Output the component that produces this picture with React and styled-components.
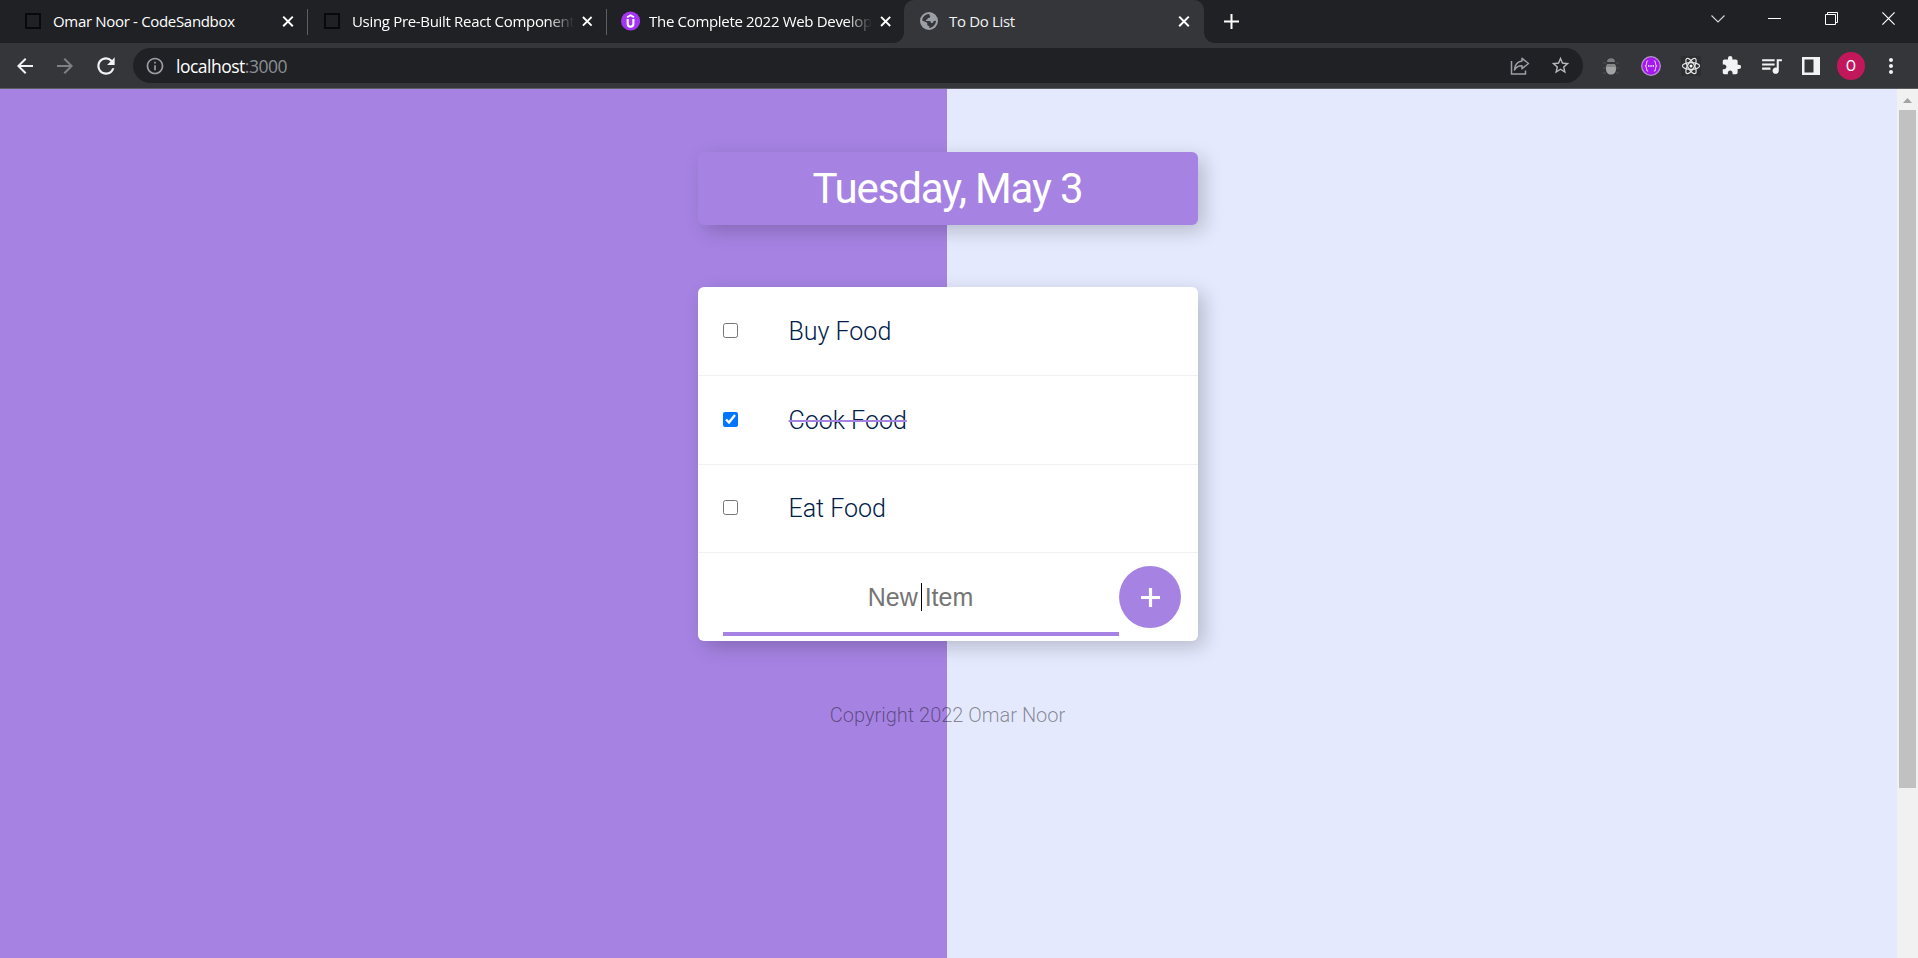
import React from "react";
import styled, { createGlobalStyle } from "styled-components";
import { MdArrowBack, MdArrowForward, MdRefresh, MdInfoOutline, MdStarBorder, MdExtension, MdQueueMusic, MdMoreVert } from "react-icons/md";

const GlobalStyle = createGlobalStyle`
  * { box-sizing: border-box; }
  body { margin: 0; overflow: hidden; }
`;

const UI_FONT = `"Open Sans", "Noto Sans", sans-serif`;
const PURPLE = "#a683e3";

const Window = styled.div`
  width: 1918px;
  height: 958px;
  display: flex;
  flex-direction: column;
  overflow: hidden;
`;

const TabStrip = styled.div`
  display: flex;
  height: 43px;
  flex: none;
  padding-left: 8px;
  background: #202124;
`;

const Tab = styled.div`
  position: relative;
  display: flex;
  align-items: center;
  width: 299px;
  height: 43px;
  padding: 0 ${(p) => p.$end || 11}px 2px ${(p) => p.$inset || 17}px;
  border-radius: 10px 10px 0 0;
  background: ${(p) => (p.$active ? "#35363a" : "transparent")};
  ${(p) => p.$active && `
    width: 300px;
    margin-left: -1px;
    padding-left: 16px;
    padding-right: 12px;
    &::before, &::after {
      content: "";
      position: absolute;
      bottom: 0;
      width: 10px;
      height: 10px;
    }
    &::before { left: -10px; background: radial-gradient(circle at 0 0, #202124 9.5px, #35363a 10px); }
    &::after { right: -10px; background: radial-gradient(circle at 100% 0, #202124 9.5px, #35363a 10px); }
  `}
`;

const TabDivider = styled.span`
  position: absolute;
  right: -1px;
  top: 9px;
  width: 1px;
  height: 26px;
  background: #5c5e62;
`;

const BlankFavicon = styled.span`
  width: 16px;
  height: 16px;
  flex: none;
  border: 2px solid #08090a;
`;

const TabTitle = styled.span`
  flex: 1;
  margin-left: ${(p) => p.$gap}px;
  margin-right: 6px;
  white-space: nowrap;
  font: 400 15px/22px ${UI_FONT};
  letter-spacing: ${(p) => p.$spacing || -0.32}px;
  color: ${(p) => (p.$active ? "#f1f3f4" : "#fff")};
  ${(p) => p.$fade && "mask-image: linear-gradient(to right, #000 calc(100% - 26px), transparent);"}
`;

const NewTab = styled.div`
  display: flex;
  align-items: center;
  margin-left: 20px;
  padding-bottom: 1px;
`;

const WindowControls = styled.div`
  display: flex;
  margin-left: auto;
  padding-right: 1px;
`;

const ControlCell = styled.div`
  display: flex;
  width: 57px;
  height: 37px;
  align-items: center;
  justify-content: center;
`;

const Toolbar = styled.div`
  display: flex;
  flex: none;
  align-items: center;
  height: 46px;
  padding-left: 5px;
  background: #35363a;
  border-bottom: 1px solid #5b5d61;
`;

const ToolCell = styled.div`
  display: flex;
  flex: none;
  align-items: center;
  justify-content: center;
  width: ${(p) => p.$w || 40}px;
  height: 35px;
  color: ${(p) => p.$color || "#f1f3f4"};
`;

const AddressBar = styled.div`
  display: flex;
  flex: none;
  align-items: center;
  width: 1450px;
  height: 35px;
  margin: 0 8px 0 7px;
  padding: 0 3px 0 12px;
  border-radius: 18px;
  background: #202124;
  color: #9aa0a6;
`;

const Address = styled.span`
  flex: 1;
  margin-left: 11px;
  font: 400 17.5px/24px ${UI_FONT};
  letter-spacing: -0.5px;
  color: #fff;
  span { color: #8b8f94; }
`;

const Avatar = styled.div`
  width: 28px;
  height: 28px;
  border-radius: 50%;
  background: #c2185b;
  color: #fff;
  text-align: center;
  font: 400 15px/28px Roboto, sans-serif;
`;

const Viewport = styled.div`
  display: flex;
  flex: 1;
  min-height: 0;
`;

const Page = styled.main`
  display: flex;
  flex-direction: column;
  align-items: center;
  width: 1897px;
  padding: 63px 1px 0 0;
  background: linear-gradient(to right, ${PURPLE} 947px, #e4e9fd 947px);
  font-family: Roboto, sans-serif;
`;

const Card = styled.section`
  width: 500px;
  border-radius: 6px;
  box-shadow: 6px 6px 19px 0 rgba(0, 0, 0, 0.2);
`;

const DateCard = styled(Card)`
  height: 73px;
  background: ${PURPLE};
`;

const DateTitle = styled.h1`
  margin: 0;
  font: 400 42px/73px Roboto, sans-serif;
  letter-spacing: -1.15px;
  text-align: center;
  text-indent: -1px;
  color: #fff;
`;

const ListCard = styled(Card)`
  height: 354px;
  margin-top: 62px;
  background: #fff;
`;

const Item = styled.div`
  display: flex;
  align-items: center;
  height: ${(p) => p.$h}px;
  padding-left: 25px;
  border-bottom: 1px solid #f1f1f1;
`;

const Check = styled.input`
  width: 15px;
  height: 15px;
  margin: 0 50.5px ${(p) => p.$lift}px 0;
  accent-color: #0075ff;
`;

const ItemText = styled.span`
  padding-top: ${(p) => p.$drop}px;
  font-size: 25px;
  font-weight: 300;
  line-height: 32px;
  color: #00204a;
  ${(p) => p.$done && `text-decoration: line-through 2px ${PURPLE};`}
`;

const NewItemForm = styled.div`
  display: flex;
  padding: 13px 17px 0 25px;
`;

const InputWrap = styled.div`
  position: relative;
  width: 396px;
  height: 70px;
`;

const NewItemInput = styled.input`
  width: 100%;
  height: 70px;
  padding: 0 1px 4px 0;
  border: 0;
  border-bottom: 4px solid ${PURPLE};
  outline: 0;
  background: transparent;
  text-align: center;
  font: 400 25px "Liberation Sans", sans-serif;
  &::placeholder { color: #757575; opacity: 1; }
`;

const Caret = styled.span`
  position: absolute;
  left: 198px;
  top: 17px;
  width: 1px;
  height: 28px;
  background: #000;
`;

const AddButton = styled.button`
  display: flex;
  align-items: center;
  justify-content: center;
  width: 62px;
  height: 62px;
  padding: 0;
  border: 0;
  border-radius: 50%;
  background: ${PURPLE};
`;

const Copyright = styled.footer`
  margin-top: 62px;
  padding-right: 1px;
  font-size: 20px;
  font-weight: 300;
  line-height: 24px;
  color: rgba(0, 0, 0, 0.43);
`;

const Scrollbar = styled.div`
  width: 21px;
  display: flex;
  flex-direction: column;
  align-items: center;
  background: #f1f1f1;
`;

const ScrollArrow = styled.div`
  height: 21px;
  padding-top: 9px;
  svg { display: block; }
`;

const Thumb = styled.div`
  width: 17px;
  height: 678px;
  background: #c1c1c1;
`;

const CloseIcon = () => (
  <svg width="16" height="16" viewBox="0 0 16 16" stroke="#fff" strokeWidth="2" fill="none">
    <path d="M3.2 3.6l9.6 9.6M12.8 3.6l-9.6 9.6" />
  </svg>
);

const UdemyIcon = () => (
  <svg width="20" height="20" viewBox="0 0 20 20" fill="none" stroke="#fff">
    <circle cx="10" cy="10" r="10" fill="#a435f0" stroke="none" />
    <path d="M6.3 6L10 3.9 13.7 6" strokeWidth="1.8" />
    <path d="M7 8v5a3 3 0 0 0 6 0V8" strokeWidth="2.2" />
  </svg>
);

const GlobeIcon = () => (
  <svg width="18" height="18" viewBox="0 0 18 18">
    <circle cx="9" cy="9" r="9" fill="#9aa0a6" />
    <path d="M9.4 2.1c-.3 1.2.2 1.7 1 1.8-.1 1.6-1.1 2.2-2.5 2.2-.2 1.3-.9 1.7-2 1.8v1.2h3.4c1.3 0 1.6.9 1.7 2h1.9c.2-1.5.9-2.3 2.2-2.500h.9c0 3.800-3 7.300-6.800 7.300v-1.800c-1.300-.2-2-.8-2-2.200v-1.200L2.200 8.500C2.300 5 5.400 1.900 9.400 2.100z" fill="#35363a" />
    <path d="M10.6 3.9c.8.1 1.4-.3 1.5-1.2 2.4 1.1 3.8 3.3 3.9 5.8-1 .6-2.2.4-2.7-.6h-2.600c-.6-1.300-1.200-1.800-2.500-1.800 1.500 0 2.500-.6 2.400-2.200z" fill="#9aa0a6" />
  </svg>
);

const ShareIcon = () => (
  <svg width="20" height="20" viewBox="0 0 20 20" fill="none" stroke="#9aa0a6" strokeWidth="1.5">
    <path d="M1.5 5v13h14v-3.5" />
    <path d="M12 2.3l6.5 5.2-6.5 5.2V9.8C8.5 9.7 6.2 10.8 4.5 14c.3-5 3-8.3 7.5-8.9z" strokeLinejoin="round" />
  </svg>
);

const BugIcon = () => (
  <svg width="18" height="20" viewBox="0 0 18 20">
    <path d="M1 7h3M1 12h3M1 17h3M14 7h3M14 12h3M14 17h3" stroke="#47484c" strokeWidth="1.5" />
    <path d="M5 6a4 3.8 0 0 1 8 0z" fill="#7d7e80" />
    <path d="M5.5 8h7Q14 9 14 12.500c0 4-2 6-5 6s-5-2-5-6Q4 9 5.500 8z" fill="#a2a3a4" />
    <path d="M5.5 8h7q1 .7 1.300 3H4.200Q4.500 8.700 5.500 8z" fill="#858687" />
  </svg>
);

const BracesIcon = () => (
  <svg width="20" height="20" viewBox="0 0 20 20" fill="none">
    <circle cx="10" cy="10" r="9.3" fill="#a516f0" stroke="#b693cb" strokeWidth="1.3" />
    <path d="M7.2 4.8C5.5 4.8 5.5 6 5.5 7.5S5 10 3.8 10c1.2 0 1.7 1 1.7 2.5s0 2.7 1.700 2.700M12.800 4.800c1.700 0 1.700 1.200 1.700 2.700s.5 2.500 1.700 2.500c-1.200 0-1.700 1-1.700 2.500s0 2.700-1.700 2.700" stroke="#dcb6f4" strokeWidth="1.1" />
    <path d="M7 10h1.400M9.300 10h1.400M11.600 10H13" stroke="#fff" strokeWidth="1.5" />
  </svg>
);

const ReactIcon = () => (
  <svg width="20" height="20" viewBox="0 0 20 20" fill="none" stroke="#e4e4e4" strokeWidth="1.2">
    <rect width="20" height="20" fill="#2d2e31" stroke="none" />
    <ellipse cx="10" cy="10" rx="8.6" ry="3.3" />
    <ellipse cx="10" cy="10" rx="8.6" ry="3.3" transform="rotate(60 10 10)" />
    <ellipse cx="10" cy="10" rx="8.6" ry="3.3" transform="rotate(120 10 10)" />
    <circle cx="10" cy="10" r="1.5" fill="#fff" stroke="none" />
  </svg>
);

const SidePanelIcon = () => (
  <svg width="18" height="18" viewBox="0 0 18 18">
    <path d="M0 0h18v18H0zM2.500 2.500v13H11.500v-13z" fill="#f1f3f4" fillRule="evenodd" />
  </svg>
);

const PlusIcon = ({ size, stroke }) => (
  <svg width={size} height={size} viewBox={`0 0 ${size} ${size}`} stroke="#fff" strokeWidth={stroke}>
    <path d={`M${size / 2} 0V${size}M0 ${size / 2}H${size}`} />
  </svg>
);

const items = [
  { text: "Buy Food", done: false, h: 89, lift: 1, drop: 2 },
  { text: "Cook Food", done: true, h: 89, lift: 1, drop: 2 },
  { text: "Eat Food", done: false, h: 88, lift: 3, drop: 1 },
];

export default function App() {
  return (
    <Window>
      <GlobalStyle />
      <TabStrip>
        <Tab>
          <BlankFavicon />
          <TabTitle $gap={12}>Omar Noor - CodeSandbox</TabTitle>
          <CloseIcon />
          <TabDivider />
        </Tab>
        <Tab>
          <BlankFavicon />
          <TabTitle $gap={12} $fade>Using Pre-Built React Component</TabTitle>
          <CloseIcon />
          <TabDivider />
        </Tab>
        <Tab $inset={15} $end={12}>
          <UdemyIcon />
          <TabTitle $gap={9} $fade>The Complete 2022 Web Develop</TabTitle>
          <CloseIcon />
        </Tab>
        <Tab $active>
          <GlobeIcon />
          <TabTitle $gap={11} $active>To Do List</TabTitle>
          <CloseIcon />
        </Tab>
        <NewTab><PlusIcon size={15} stroke={2} /></NewTab>
        <WindowControls>
          <ControlCell>
            <svg width="14" height="8" viewBox="0 0 14 8" fill="none" stroke="#d5d6d8" strokeWidth="1.1"><path d="M.5.5L7 7 13.5.5" /></svg>
          </ControlCell>
          <ControlCell>
            <svg width="13" height="1" viewBox="0 0 13 1"><path d="M0 0h13v1H0z" fill="#fff" /></svg>
          </ControlCell>
          <ControlCell>
            <svg width="13" height="13" viewBox="0 0 13 13" fill="none" stroke="#fff"><path d="M.5 2.5h10v10H.5zM2.5 2.500v-2h10v10h-2" /></svg>
          </ControlCell>
          <ControlCell>
            <svg width="13" height="13" viewBox="0 0 13 13" fill="none" stroke="#fff" strokeWidth="1.2"><path d="M.4.4l12.2 12.2M12.6.4L.4 12.6" /></svg>
          </ControlCell>
        </WindowControls>
      </TabStrip>

      <Toolbar>
        <ToolCell><MdArrowBack size={24} /></ToolCell>
        <ToolCell $color="#7e8084"><MdArrowForward size={24} /></ToolCell>
        <ToolCell $w={41}><MdRefresh size={26} /></ToolCell>
        <AddressBar>
          <MdInfoOutline size={20} />
          <Address>localhost<span>:3000</span></Address>
          <ToolCell $color="#9aa0a6"><ShareIcon /></ToolCell>
          <ToolCell $color="#b5b8bc"><MdStarBorder size={21} /></ToolCell>
        </AddressBar>
        <ToolCell><BugIcon /></ToolCell>
        <ToolCell><BracesIcon /></ToolCell>
        <ToolCell><ReactIcon /></ToolCell>
        <ToolCell><MdExtension size={21} /></ToolCell>
        <ToolCell><MdQueueMusic size={25} /></ToolCell>
        <ToolCell><SidePanelIcon /></ToolCell>
        <ToolCell><Avatar>O</Avatar></ToolCell>
        <ToolCell><MdMoreVert size={24} /></ToolCell>
      </Toolbar>

      <Viewport>
        <Page>
          <DateCard><DateTitle>Tuesday, May 3</DateTitle></DateCard>
          <ListCard>
            {items.map((item) => (
              <Item key={item.text} $h={item.h}>
                <Check type="checkbox" defaultChecked={item.done} $lift={item.lift} />
                <ItemText $done={item.done} $drop={item.drop}>{item.text}</ItemText>
              </Item>
            ))}
            <NewItemForm>
              <InputWrap>
                <NewItemInput placeholder="New Item" />
                <Caret />
              </InputWrap>
              <AddButton aria-label="Add"><PlusIcon size={19} stroke={3.2} /></AddButton>
            </NewItemForm>
          </ListCard>
          <Copyright>Copyright 2022 Omar Noor</Copyright>
        </Page>
        <Scrollbar>
          <ScrollArrow>
            <svg width="9" height="5" viewBox="0 0 9 5"><path d="M4.500 0L9 5H0z" fill="#a3a3a3" /></svg>
          </ScrollArrow>
          <Thumb />
        </Scrollbar>
      </Viewport>
    </Window>
  );
}
